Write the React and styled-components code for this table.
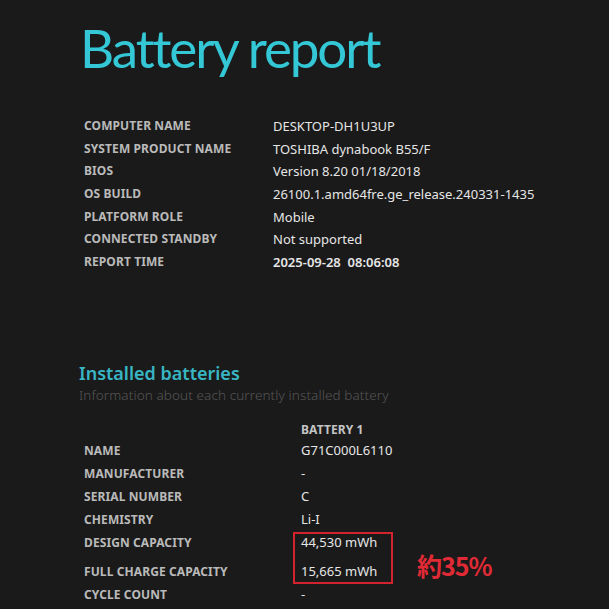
import React from "react";
import styled, { createGlobalStyle } from "styled-components";

const Global = createGlobalStyle`
  html, body { margin: 0; padding: 0; background: #1a1a1a; }
  body { width: 609px; height: 609px; overflow: hidden; font-family: "Noto Sans", "Open Sans", sans-serif; }
`;

const Page = styled.div`
  width: 609px;
  height: 609px;
  background: #1a1a1a;
  box-sizing: border-box;
  padding: 18px 0 0 0;
  display: flex;
  flex-direction: column;
`;

const Title = styled.h1`
  margin: 0 0 0 80px;
  font-family: Lato, "Noto Sans", sans-serif;
  font-weight: 400;
  font-size: 53px;
  line-height: 60px;
  letter-spacing: -2.1px;
  color: #34c7d6;
`;

const Table = styled.div`
  position: relative;
  display: grid;
  grid-template-columns: ${(p) => p.$labelWidth}px 1fr;
  margin-left: 84px;
  margin-top: ${(p) => p.$top}px;
`;

const Label = styled.div`
  box-sizing: border-box;
  height: ${(p) => p.$h || 22.7}px;
  padding-top: ${(p) => p.$pt || 0}px;
  line-height: ${(p) => (p.$lh || p.$h || 22.7)}px;
  font-size: 12px;
  font-weight: 700;
  color: #bababa;
  white-space: nowrap;
  letter-spacing: 0.1px;
`;

const Value = styled.div`
  box-sizing: border-box;
  height: ${(p) => p.$h || 22.7}px;
  padding-top: ${(p) => p.$pt || 0}px;
  line-height: ${(p) => (p.$lh || p.$h || 22.7)}px;
  font-size: 13px;
  font-weight: ${(p) => (p.$bold ? 600 : 400)};
  color: #e6e6e6;
  white-space: pre;
`;

const Header = styled(Label)`
  color: #c4c4c4;
`;

const SectionTitle = styled.h2`
  margin: 88px 0 0 79px;
  font-size: 18px;
  font-weight: 600;
  line-height: 22px;
  color: #38b6c4;
`;

const SectionSub = styled.div`
  margin: 0 0 0 79px;
  font-size: 13.5px;
  font-weight: 300;
  line-height: 22px;
  letter-spacing: 0.1px;
  color: #565656;
`;

const Highlight = styled.div`
  position: absolute;
  left: 209px;
  top: 112px;
  width: 100px;
  height: 52px;
  box-sizing: border-box;
  border: 2.5px solid #d2232e;
`;

const Note = styled.div`
  position: absolute;
  left: 333px;
  top: 133px;
  font-family: "Noto Sans CJK JP", "Noto Sans", sans-serif;
  font-size: 25px;
  line-height: 25px;
  font-weight: 700;
  color: #e02a35;
  letter-spacing: -1px;
`;

const system = [
  ["COMPUTER NAME", "DESKTOP-DH1U3UP"],
  ["SYSTEM PRODUCT NAME", "TOSHIBA dynabook B55/F"],
  ["BIOS", "Version 8.20 01/18/2018"],
  ["OS BUILD", "26100.1.amd64fre.ge_release.240331-1435"],
  ["PLATFORM ROLE", "Mobile"],
  ["CONNECTED STANDBY", "Not supported"],
  ["REPORT TIME", "2025-09-28  08:06:08", true],
];

const battery = [
  ["NAME", "G71C000L6110"],
  ["MANUFACTURER", "-"],
  ["SERIAL NUMBER", "C"],
  ["CHEMISTRY", "Li-I"],
  ["DESIGN CAPACITY", "44,530 mWh"],
  ["FULL CHARGE CAPACITY", "15,665 mWh", 29, 6],
  ["CYCLE COUNT", "-"],
];

export default function App() {
  return (
    <Page>
      <Global />
      <Title>Battery report</Title>
      <Table $labelWidth={189} $top={37}>
        {system.map(([k, v, b]) => (
          <React.Fragment key={k}>
            <Label>{k}</Label>
            <Value $bold={b}>{v}</Value>
          </React.Fragment>
        ))}
      </Table>
      <SectionTitle>Installed batteries</SectionTitle>
      <SectionSub>Information about each currently installed battery</SectionSub>
      <Table $labelWidth={217} $top={14}>
        <Label $h={19} />
        <Header $h={19}>BATTERY 1</Header>
        {battery.map(([k, v, h, pt]) => (
          <React.Fragment key={k}>
            <Label $h={h || 23} $pt={pt} $lh={23}>{k}</Label>
            <Value $h={h || 23} $pt={pt} $lh={23}>{v}</Value>
          </React.Fragment>
        ))}
        <Highlight />
        <Note>約35%</Note>
      </Table>
    </Page>
  );
}
